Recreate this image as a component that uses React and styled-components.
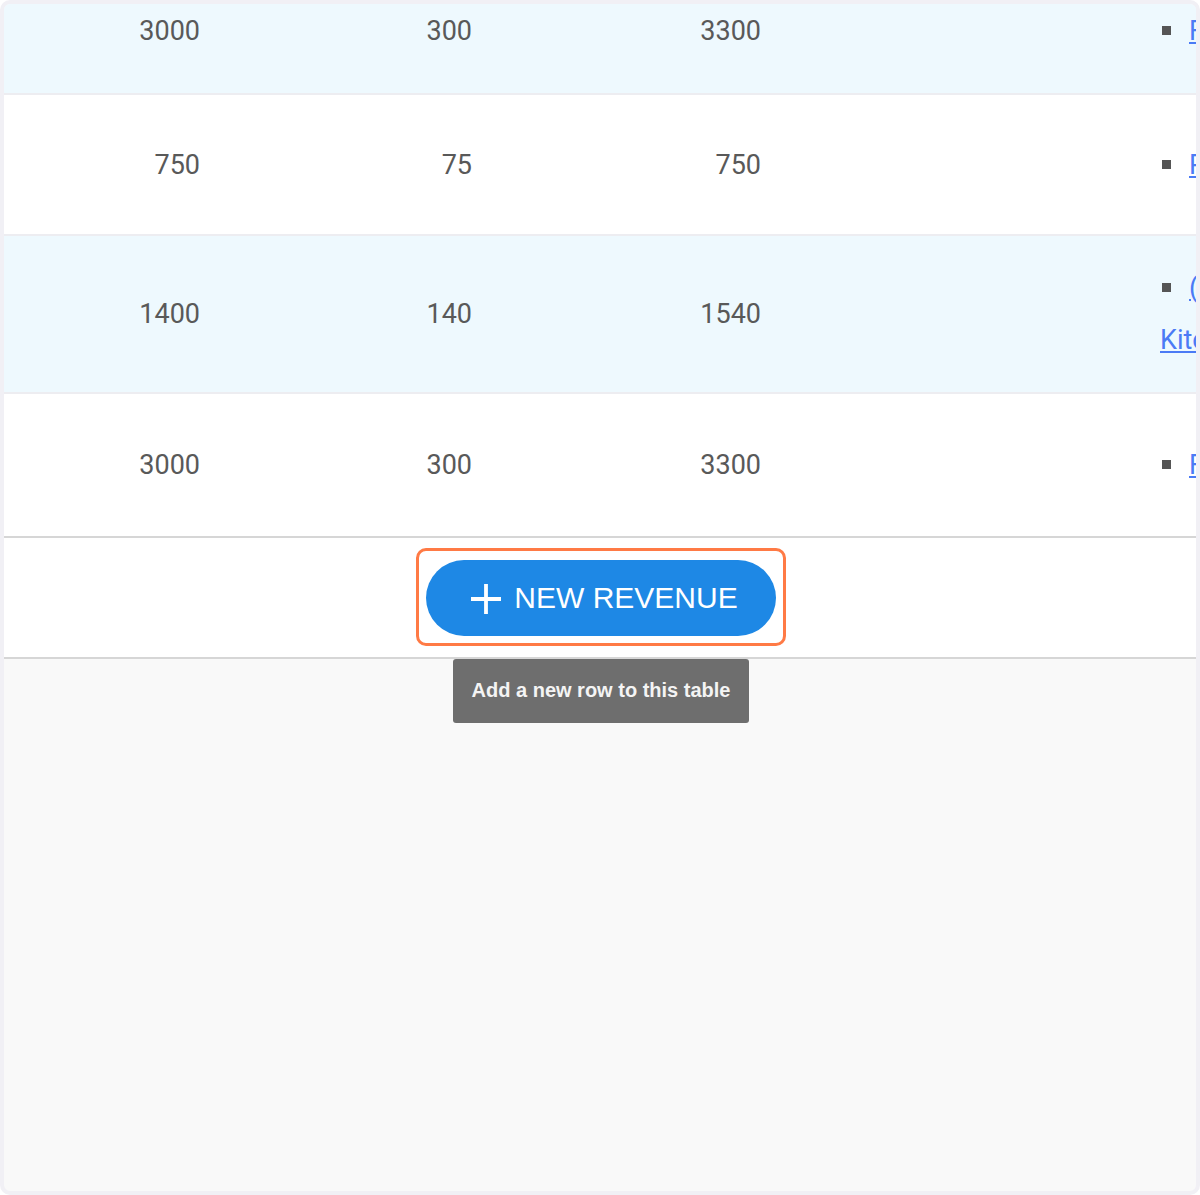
import React from 'react';
import styled, { createGlobalStyle } from 'styled-components';

const GlobalStyle = createGlobalStyle`
  html, body {
    margin: 0;
    padding: 0;
    background: #ffffff;
  }
  * {
    box-sizing: border-box;
  }
`;

const rows = [
  { amount: 3000, tax: 300, total: 3300, item: 'Flooring', tone: 'blue', height: 89, top: true },
  { amount: 750, tax: 75, total: 750, item: 'Plumbing', tone: 'white', height: 139 },
  { amount: 1400, tax: 140, total: 1540, item: '(Custom) Kitchen', tone: 'blue', height: 156 },
  { amount: 3000, tax: 300, total: 3300, item: 'Flooring', tone: 'white', height: 142, last: true },
];

const App = () => {
  return (
    <>
      <GlobalStyle />
      <Frame>
        <Table>
          {rows.map((row, i) => (
            <Row key={i} $tone={row.tone} $height={row.height} $top={row.top} $last={row.last}>
              <NumCell>{row.amount}</NumCell>
              <NumCell>{row.tax}</NumCell>
              <NumCell>{row.total}</NumCell>
              <EmptyCell />
              <ItemCell>
                <ItemList>
                  <li>
                    <Bullet />
                    <ItemLink href="#">{row.item}</ItemLink>
                  </li>
                </ItemList>
              </ItemCell>
            </Row>
          ))}
        </Table>
        <Footer>
          <ButtonWrap>
            <Highlight />
            <AddButton type="button">
              <svg width="32" height="32" viewBox="0 0 32 32" fill="none">
                <path d="M16 1v30M1 16h30" stroke="currentColor" strokeWidth="3.8" />
              </svg>
              New Revenue
            </AddButton>
            <Tooltip>Add a new row to this table</Tooltip>
          </ButtonWrap>
        </Footer>
      </Frame>
    </>
  );
};

const Frame = styled.div`
  width: 1200px;
  height: 1195px;
  border: 4px solid #f1f0f5;
  border-radius: 10px;
  background: #f9f9f9;
  overflow: hidden;
  font-family: Roboto, 'Liberation Sans', Arial, sans-serif;
`;

const Table = styled.div`
  display: flex;
  flex-direction: column;
`;

const Row = styled.div`
  display: grid;
  grid-template-columns: 196px 272px 289px 399px 180px;
  align-items: ${(p) => (p.$top ? 'start' : 'center')};
  height: ${(p) => (p.$last ? p.$height : p.$height + 2)}px;
  padding-top: ${(p) => (p.$top ? 1 : 0)}px;
  background: ${(p) => (p.$tone === 'blue' ? '#eef9fe' : '#ffffff')};
  border-bottom: ${(p) => (p.$last ? 'none' : '2px solid #ededf1')};
`;

const NumCell = styled.div`
  text-align: right;
  font-size: 27px;
  line-height: 52px;
  color: #595959;
`;

const EmptyCell = styled.div``;

const ItemCell = styled.div`
  font-size: 27px;
  line-height: 52px;
  color: #555555;
`;

const ItemList = styled.ul`
  margin: 0;
  padding: 0;
  list-style: none;
`;

const Bullet = styled.span`
  display: inline-block;
  width: 9px;
  height: 9px;
  margin: 0 18px 0 2px;
  background: #555555;
  vertical-align: middle;
  position: relative;
  top: -2px;
`;

const ItemLink = styled.a`
  color: #4b7bf5;
  text-decoration: underline;
`;

const Footer = styled.div`
  height: 123px;
  border-top: 2px solid #d6d6d6;
  border-bottom: 2px solid #d6d6d6;
  background: #ffffff;
  display: flex;
  align-items: center;
  justify-content: center;
  padding-left: 2px;
`;

const ButtonWrap = styled.div`
  position: relative;
  display: flex;
  justify-content: center;
`;

const Highlight = styled.div`
  position: absolute;
  inset: -12px -10px -10px -10px;
  border: 3px solid #ff7a45;
  border-radius: 10px;
  pointer-events: none;
`;

const AddButton = styled.button`
  display: flex;
  align-items: center;
  justify-content: center;
  gap: 12px;
  width: 350px;
  height: 76px;
  padding: 0 0 0 6px;
  border: none;
  border-radius: 38px;
  background: #1e88e5;
  color: #ffffff;
  font-family: 'Liberation Sans', Arial, sans-serif;
  font-size: 30px;
  text-transform: uppercase;
  cursor: pointer;

  svg {
    margin-top: 2px;
  }
`;

const Tooltip = styled.div`
  position: absolute;
  top: 99px;
  left: 50%;
  transform: translateX(-50%);
  width: 296px;
  height: 64px;
  display: flex;
  align-items: center;
  justify-content: center;
  background: #6e6e6e;
  border-radius: 3px;
  color: #f4f4f4;
  font-family: 'Liberation Sans', Arial, sans-serif;
  font-size: 20px;
  font-weight: 700;
  white-space: nowrap;
`;

export default App;
